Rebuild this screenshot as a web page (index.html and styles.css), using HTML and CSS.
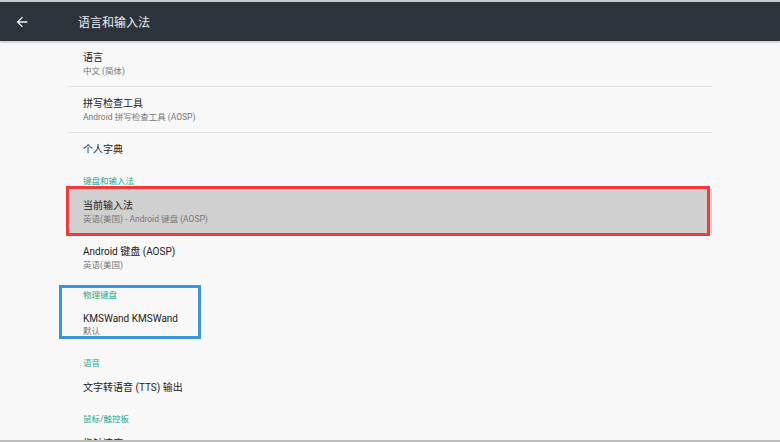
FILE: index.html
```html
<!DOCTYPE html>
<html lang="zh-Hans">
<head>
  <meta charset="UTF-8" />
  <meta name="viewport" content="width=device-width, initial-scale=1.0"/>
  <title>语言和输入法</title>
  <link rel="stylesheet" href="styles.css">
</head>
<body>
  <div class="screen">
    <header class="appbar">
      <button class="back">
        <svg viewBox="0 0 24 24"><path d="M20 11H7.83l5.59-5.59L12 4l-8 8 8 8 1.41-1.41L7.83 13H20v-2z"/></svg>
      </button>
      <h1>语言和输入法</h1>
    </header>

    <main class="list">
      <div class="pref divided">
        <div class="pref-title">语言</div>
        <div class="pref-sub">中文 (简体)</div>
      </div>
      <div class="pref divided">
        <div class="pref-title">拼写检查工具</div>
        <div class="pref-sub">Android 拼写检查工具 (AOSP)</div>
      </div>
      <div class="pref single">
        <div class="pref-title">个人字典</div>
      </div>

      <div class="category">键盘和输入法</div>
      <div class="pref divided selected">
        <div class="pref-title">当前输入法</div>
        <div class="pref-sub">英语(美国) - Android 键盘 (AOSP)</div>
        <span class="mark mark-red"></span>
      </div>
      <div class="pref">
        <div class="pref-title">Android 键盘 (AOSP)</div>
        <div class="pref-sub">英语(美国)</div>
      </div>

      <div class="group">
        <div class="category">物理键盘</div>
        <div class="pref tight">
          <div class="pref-title">KMSWand KMSWand</div>
          <div class="pref-sub">默认</div>
        </div>
        <span class="mark mark-blue"></span>
      </div>

      <div class="category">语音</div>
      <div class="pref single">
        <div class="pref-title">文字转语音 (TTS) 输出</div>
      </div>

      <div class="category">鼠标/触控板</div>
      <div class="pref single">
        <div class="pref-title">指针速度</div>
      </div>
    </main>
  </div>
</body>
</html>
```

FILE: styles.css
```css
body {
  margin: 0;
  font-family: Roboto, "Noto Sans CJK SC", sans-serif;
  background: #f8f8f8;
}
.screen {
  height: 442px;
  overflow: hidden;
  box-sizing: border-box;
  border-top: 2px solid #cacaca;
  border-bottom: 2px solid #bdbdbd;
  background: #f8f8f8;
}
.appbar {
  position: relative;
  z-index: 2;
  height: 39px;
  display: flex;
  align-items: center;
  background: #2c333a;
  box-shadow: 0 1px 3px rgba(0,0,0,0.28);
}
.back {
  background: none;
  border: none;
  padding: 0 0 0 14px;
  width: 30px;
  height: 16px;
  display: flex;
  cursor: pointer;
}
.back svg {
  width: 16px;
  height: 16px;
  fill: #f2f2f2;
}
.appbar h1 {
  margin: 0 0 0 48px;
  font-size: 12px;
  font-weight: normal;
  color: #eceeef;
}
.list {
  margin-left: 68px;
  width: 644px;
}
.pref {
  position: relative;
  padding: 10px 15px 8px;
  height: 27px;
}
.pref.single {
  height: 14px;
  padding-bottom: 9px;
}
.pref.tight {
  padding-top: 9px;
  padding-bottom: 9px;
}
.pref.tight .pref-sub {
  line-height: 11px;
}
.pref.divided {
  border-bottom: 1px solid #e3e3e3;
}
.pref.selected {
  background: #d0d0d0;
}
.pref-title {
  font-size: 10px;
  line-height: 14px;
  color: #212121;
  white-space: nowrap;
}
.pref-sub {
  font-size: 8.5px;
  line-height: 13px;
  color: #777;
  white-space: nowrap;
}
.category {
  padding: 9px 15px 2px;
  font-size: 8.5px;
  line-height: 12px;
  color: #22a892;
}
.group {
  position: relative;
}
.mark {
  position: absolute;
  box-sizing: border-box;
  border: 3px solid;
  pointer-events: none;
}
.mark-red {
  top: -3px;
  left: -2px;
  right: 2px;
  bottom: -2px;
  border-color: #f03a3c;
}
.mark-blue {
  top: 5px;
  left: -9px;
  width: 142px;
  height: 54px;
  border-color: #3b95e1;
}
```
